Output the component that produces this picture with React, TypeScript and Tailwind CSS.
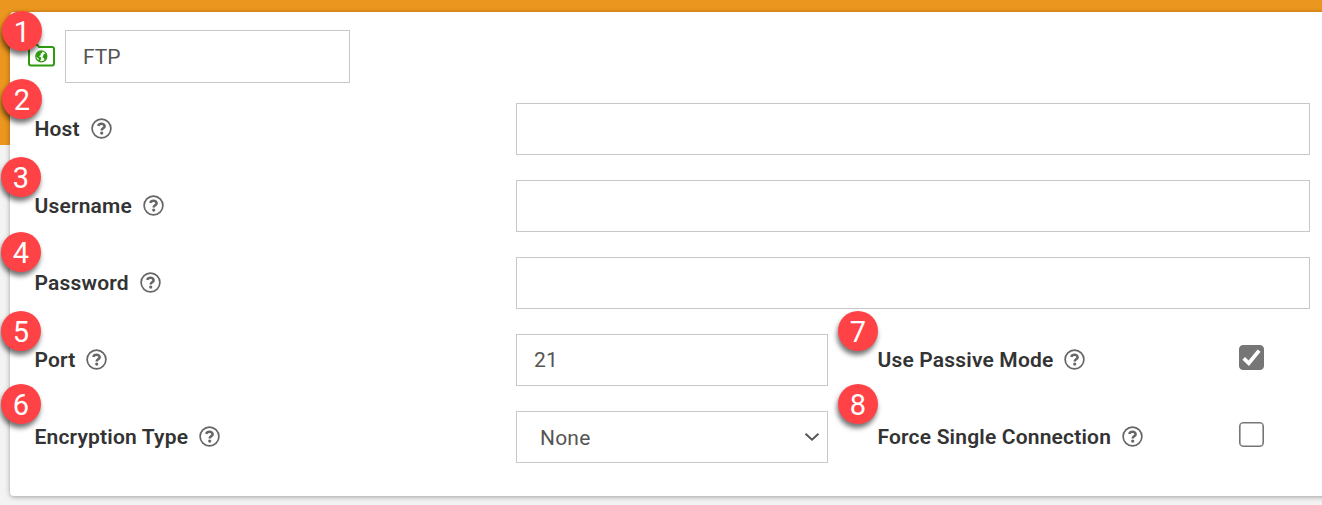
import { useState } from "react";
import type { ReactNode } from "react";

function Badge({ n, className }: { n: number; className: string }) {
  return (
    <span
      className={`absolute flex h-10 w-10 items-center justify-center rounded-full bg-[#ff4245] pt-0.5 text-[29px] leading-none text-white shadow-[-1px_4px_5px_rgba(0,0,0,0.55)] ${className}`}
    >
      {n}
    </span>
  );
}

function HelpIcon() {
  return (
    <svg viewBox="0 0 21 21" className="relative -top-px ml-[10.8px] h-[21px] w-[21px] shrink-0" fill="none" stroke="#666">
      <circle cx="10.5" cy="10.5" r="9.4" strokeWidth="1.7" />
      <path d="M7.2 7.900c.5-1.400 1.600-2.100 3.300-2.100 1.800 0 3.100.9 3.100 2.400 0 2.100-2.900 2.100-2.900 4.200" strokeWidth="2.6" />
      <circle cx="10.7" cy="15.100" r="1.600" fill="#666" stroke="none" />
    </svg>
  );
}

function Label({ children }: { children: ReactNode }) {
  return (
    <div className="flex items-center text-[21px] font-semibold tracking-[0.18px] whitespace-nowrap text-[#333]">
      <span className="relative top-px -ml-[0.5px]">{children}</span>
      <HelpIcon />
    </div>
  );
}

function FolderIcon() {
  return (
    <svg viewBox="0 0 28 26" className="relative -top-[2px] left-px h-[26px] w-7 shrink-0" fill="none" stroke="#2e9b0f">
      <path d="M3 5V3h6.500l1.500 2H24a2 2 0 0 1 2 2V21.500a2 2 0 0 1-2 2H3a2 2 0 0 1-2-2V5" strokeWidth="2" />
      <circle cx="13.300" cy="14.300" r="5.500" strokeWidth="1.3" />
      <path
        d="M8 13.500C8.500 10.500 11 8.700 14 9l.3 1.800-1.700 1 .2 1.500-2 1 2.500 1.200-.3 1.800-1.200 2.300-1.400-.6.3-2.400L8 14.500ZM15.500 12.500l3-1.500.5 4-2.300 3.500-.9-2.500-1.300-.8Z"
        fill="#2e9b0f"
        stroke="none"
      />
    </svg>
  );
}

const box = "h-[52px] w-full rounded-none border border-[#c8c8c8] bg-white text-[21px] tracking-[0.2px] text-[#555] outline-none";

function Checkbox({ initial = false }: { initial?: boolean }) {
  const [on, setOn] = useState(initial);
  return (
    <button
      role="checkbox"
      aria-checked={on}
      onClick={() => setOn(!on)}
      className={`mt-[-5px] flex h-[25px] w-[25px] items-center justify-center rounded-[4px] border border-[#767676] shadow-[inset_0_0_0_0.6px_#767676] ${on ? "bg-[#767676]" : "bg-white"}`}
    >
      {on && (
        <svg viewBox="0 0 22 22" className="h-[22px] w-[22px] shrink-0" fill="none" stroke="white" strokeWidth="3.8">
          <path d="m2.700 11.300 5.1 5L18.1 3.600" />
        </svg>
      )}
    </button>
  );
}

export default function App() {
  return (
    <div className="relative h-[505px] w-[1322px] overflow-hidden bg-[#f3f3f3] bg-[linear-gradient(#eb961e,#eb961e)] bg-[length:100%_145px] bg-no-repeat pt-3 pl-2.5 font-['Roboto',sans-serif]">
      <main className="h-[484px] w-[1330px] rounded-[4px] bg-white pt-[18px] pl-[17px] shadow-[0_1px_5px_rgba(0,0,0,0.35)]">
        <div className="flex h-[53px] items-center gap-[10px]">
          <FolderIcon />
          <input aria-label="Name" defaultValue="FTP" className="h-[53px] w-[285px] border border-[#c8c8c8] px-[17px] text-[21px] text-[#555] outline-none" />
        </div>
        <div className="mt-5 ml-2 grid w-[1275px] grid-cols-[481px_312px_50px_361px_1fr] gap-y-[25px]">
          {["Host", "Username", "Password"].map((name) => (
            <div key={name} className="col-span-5 grid grid-cols-[481px_794px] items-center">
              <Label>{name}</Label>
              <input aria-label={name} className={`${box} px-[17px]`} />
            </div>
          ))}
          <Label>Port</Label>
          <input aria-label="Port" defaultValue="21" className={`${box} px-[17px]`} />
          <span />
          <Label>Use Passive Mode</Label>
          <div className="flex items-center">
            <Checkbox initial />
          </div>
          <Label>Encryption Type</Label>
          <button className={`${box} flex items-center justify-between pr-[7px] pl-[23px]`}>
            <span className="mt-[3px]">None</span>
            <svg viewBox="0 0 16 10" className="h-2.5 w-4" fill="none" stroke="#555" strokeWidth="2">
              <path d="m1.5 1.7 6.5 6 6.5-6" />
            </svg>
          </button>
          <span />
          <Label>Force Single Connection</Label>
          <div className="flex items-center">
            <Checkbox />
          </div>
        </div>
      </main>
      <Badge n={1} className="top-[11px] left-0.5" />
      <Badge n={2} className="top-[79px] left-0.5" />
      <Badge n={3} className="top-[157px] left-px" />
      <Badge n={4} className="top-[232px] left-px" />
      <Badge n={5} className="top-[311px] left-px" />
      <Badge n={6} className="top-[384px] left-px" />
      <Badge n={7} className="top-[311px] left-[838px]" />
      <Badge n={8} className="top-[384px] left-[838px]" />
    </div>
  );
}
